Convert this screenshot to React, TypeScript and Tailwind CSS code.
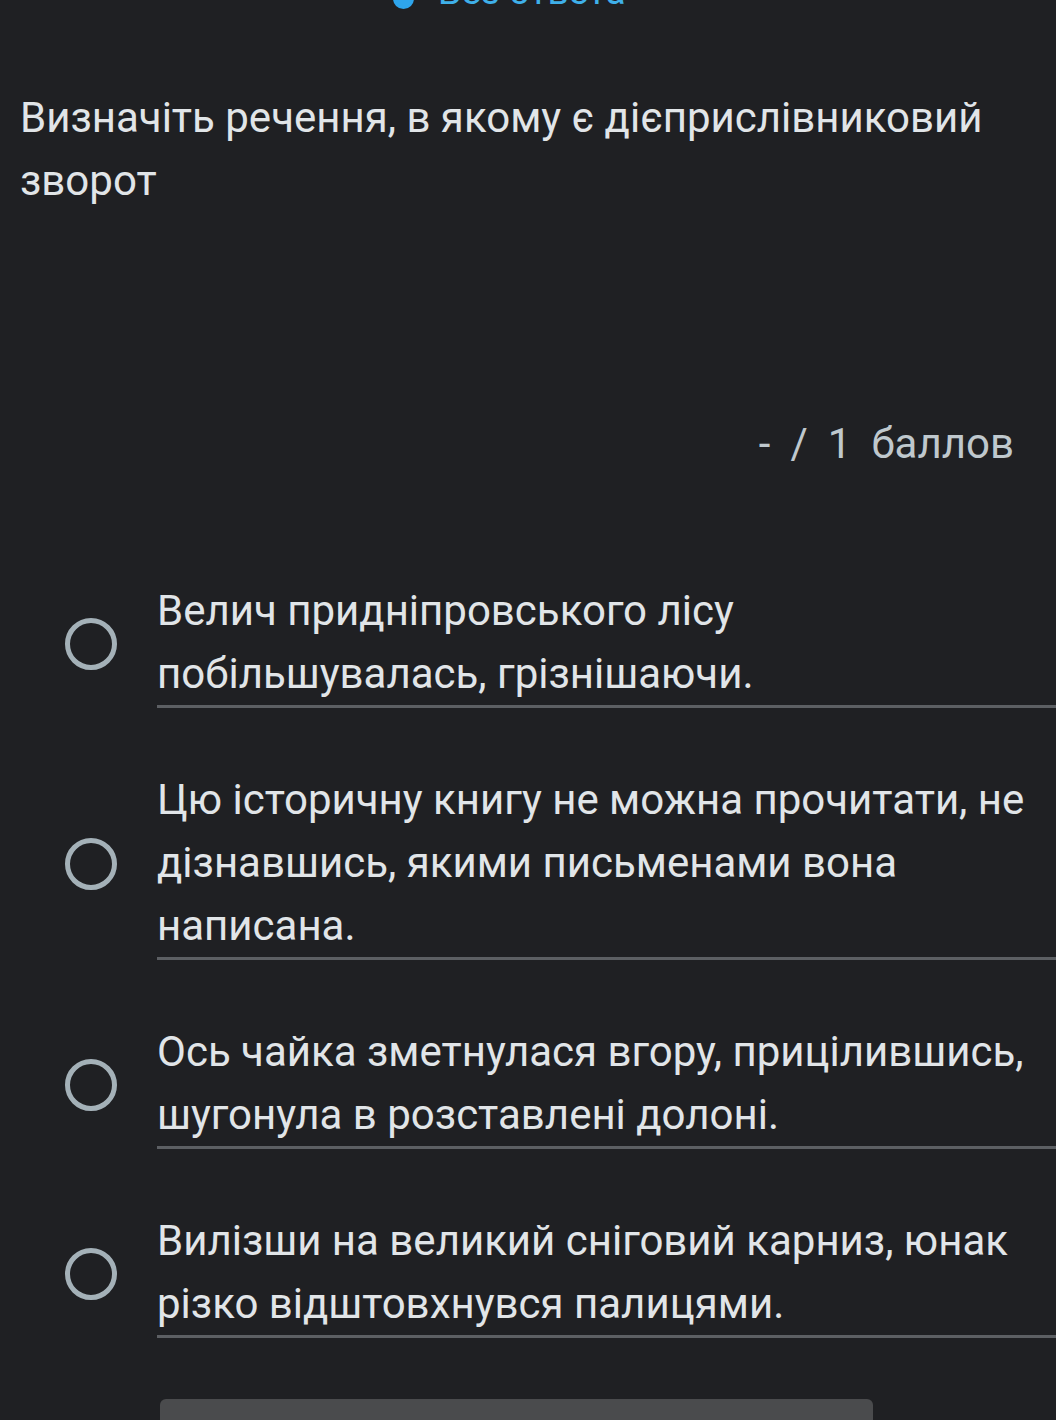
import React from "react";

const options: string[][] = [
  ["Велич придніпровського лісу", "побільшувалась, грізнішаючи."],
  ["Цю історичну книгу не можна прочитати, не", "дізнавшись, якими письменами вона", "написана."],
  ["Ось чайка зметнулася вгору, прицілившись,", "шугонула в розставлені долоні."],
  ["Вилізши на великий сніговий карниз, юнак", "різко відштовхнувся палицями."],
];

export default function App() {
  return (
    <div
      className="h-[1420px] w-[1056px] overflow-hidden bg-[#1f2023] text-[#e1e5e8]"
      style={{ fontFamily: "Roboto, 'Noto Sans', sans-serif" }}
    >
      <div className="mt-[-36px] flex h-[56px] items-center justify-start pl-[393px] text-[37px] leading-[56px] text-[#3fb0ea]">
        <span className="mt-[12px] h-[21px] w-[21px] rounded-full bg-[#2ea5ec]" />
        <span className="ml-[24px]">Без ответа</span>
      </div>

      <div className="mt-[66px] px-5 text-[42px] leading-[63px]">
        Визначіть речення, в якому є дієприслівниковий
        <br />
        зворот
      </div>

      <div className="mt-[200px] flex justify-end gap-[20px] pr-[42px] text-[42px] leading-[63px] text-[#bfc8cd]">
        <span>-</span>
        <span>/</span>
        <span>1</span>
        <span>баллов</span>
      </div>

      <div className="mt-[104px] flex flex-col gap-[60px]">
        {options.map((lines, i) => (
          <div key={i} className="flex items-center">
            <div className="ml-[65px] mr-[40px] h-[52px] w-[52px] shrink-0 rounded-full border-[5px] border-[#a4b1b8]" />
            <div className="flex-1 border-b-[3px] border-[#5c5f63] text-[42px] leading-[63px] whitespace-nowrap">
              {lines.map((l, j) => (
                <div key={j}>{l}</div>
              ))}
            </div>
          </div>
        ))}
      </div>

      <div className="ml-[160px] mt-[61px] h-[40px] w-[713px] rounded-t-[6px] bg-[#4a4b4d]" />
    </div>
  );
}
